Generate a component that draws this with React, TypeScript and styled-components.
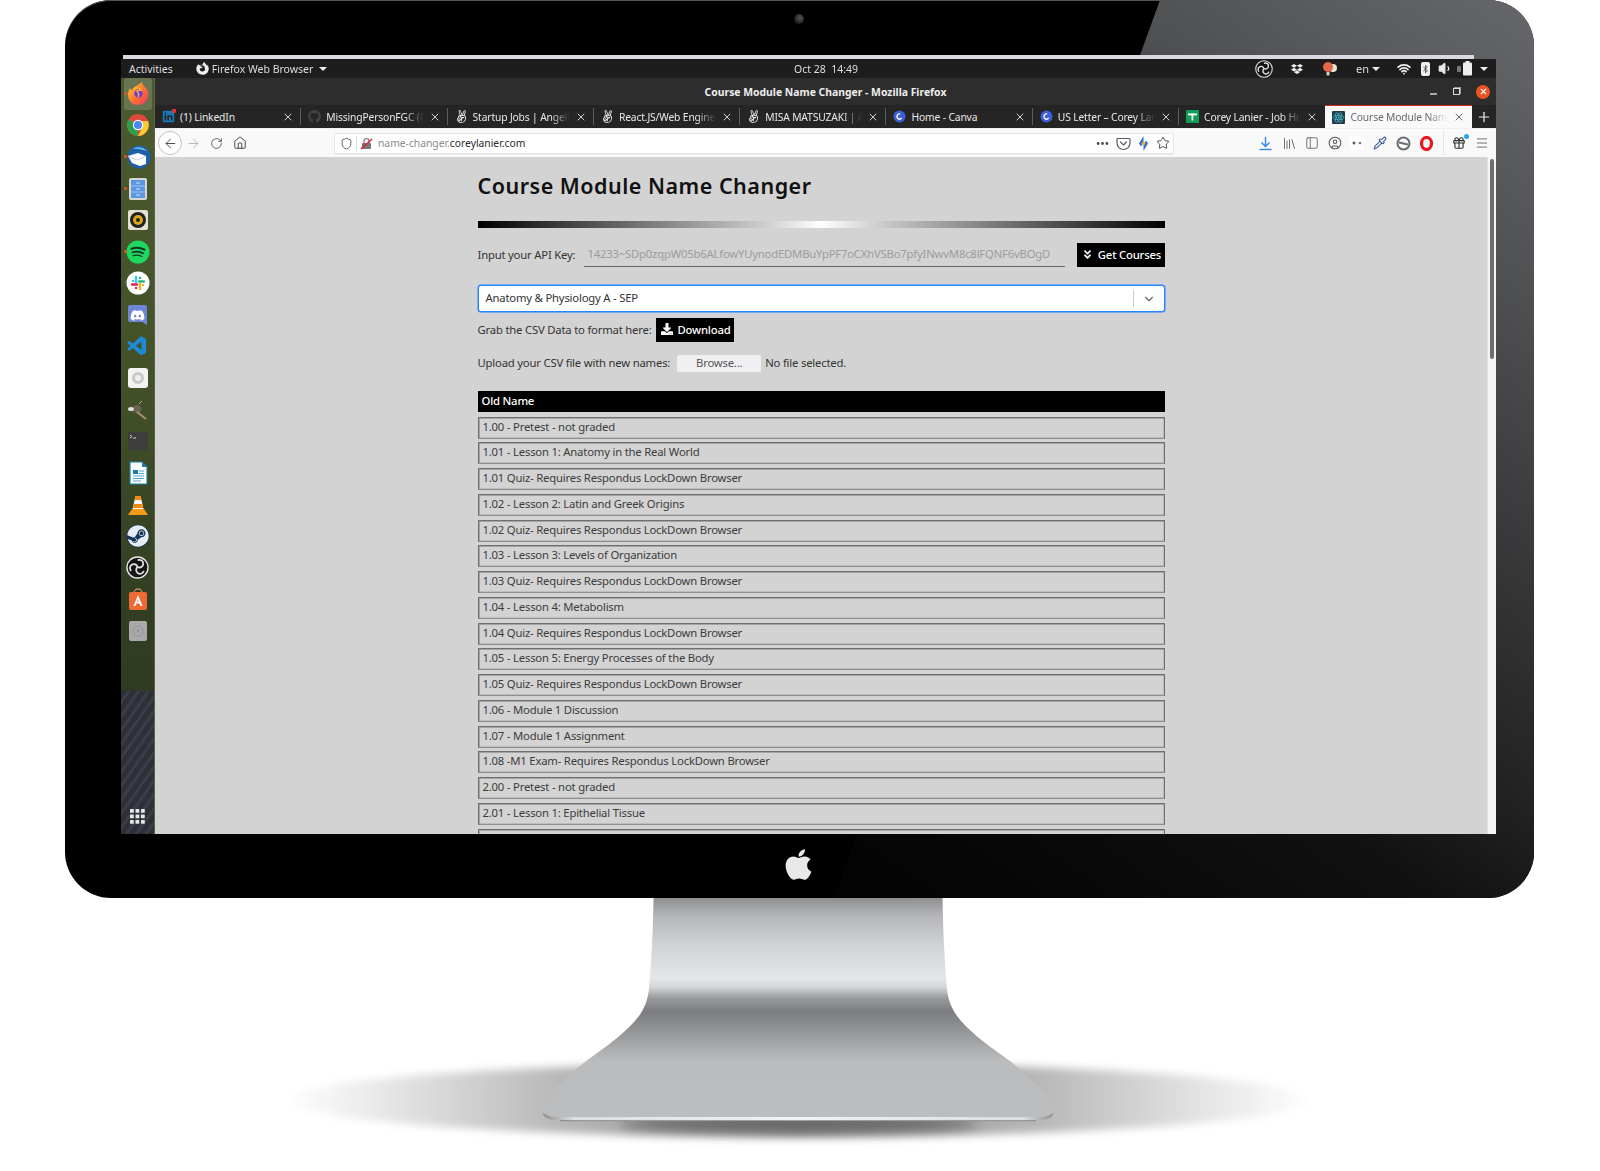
import type { ReactNode } from "react";
import styled, { createGlobalStyle } from "styled-components";
import {
  ArrowLeft,
  ArrowRight,
  Bluetooth,
  ChevronDown,
  CircleUser,
  Ellipsis,
  Gift,
  House,
  Library,
  Menu,
  PanelLeft,
  Pipette,
  Plus,
  RotateCw,
  Shield,
  Star,
  Volume1,
  Wifi,
  X,
} from "lucide-react";
import {
  FaAngellist,
  FaAngleDoubleDown,
  FaApple,
  FaDownload,
  FaDropbox,
  FaFirefoxBrowser,
  FaGithub,
  FaLinkedin,
  FaSteam,
  FaDiscord,
} from "react-icons/fa";
import { VscVscode } from "react-icons/vsc";

const uiFont = `"Noto Sans", "Open Sans", "DejaVu Sans", sans-serif`;

const GlobalStyle = createGlobalStyle`
  html, body {
    margin: 0;
    padding: 0;
    background: #fff;
    overflow: hidden;
  }
  * {
    box-sizing: border-box;
  }
`;

const rows = [
  "1.00 - Pretest - not graded",
  "1.01 - Lesson 1: Anatomy in the Real World",
  "1.01 Quiz- Requires Respondus LockDown Browser",
  "1.02 - Lesson 2: Latin and Greek Origins",
  "1.02 Quiz- Requires Respondus LockDown Browser",
  "1.03 - Lesson 3: Levels of Organization",
  "1.03 Quiz- Requires Respondus LockDown Browser",
  "1.04 - Lesson 4: Metabolism",
  "1.04 Quiz- Requires Respondus LockDown Browser",
  "1.05 - Lesson 5: Energy Processes of the Body",
  "1.05 Quiz- Requires Respondus LockDown Browser",
  "1.06 - Module 1 Discussion",
  "1.07 - Module 1 Assignment",
  "1.08 -M1 Exam- Requires Respondus LockDown Browser",
  "2.00 - Pretest - not graded",
  "2.01 - Lesson 1: Epithelial Tissue",
  "",
];

const LinkedinFav = () => (
  <FavWrap>
    <FaLinkedin size={13} color="#1a78b8" />
    <FavDot />
  </FavWrap>
);

const CanvaFav = () => (
  <svg width="13" height="13" viewBox="0 0 13 13">
    <circle cx="6.5" cy="6.5" r="6" fill="#3d5fd8" />
    <circle cx="6.5" cy="6.5" r="2.6" fill="none" stroke="#fff" strokeWidth="1.3" strokeDasharray="11 5" transform="rotate(35 6.5 6.5)" />
  </svg>
);

const SheetFav = () => (
  <svg width="13" height="13" viewBox="0 0 13 13">
    <rect width="13" height="13" rx="1" fill="#0f9d58" />
    <rect x="2" y="3.5" width="9" height="1.8" fill="#fff" />
    <rect x="5.5" y="3.5" width="1.8" height="7" fill="#fff" />
  </svg>
);

const ReactFav = () => (
  <svg width="13" height="13" viewBox="0 0 13 13">
    <rect width="13" height="13" rx="1" fill="#1f3a44" />
    <g fill="none" stroke="#4fc3d8" strokeWidth=".7">
      <ellipse cx="6.5" cy="6.5" rx="5.4" ry="2.1" />
      <ellipse cx="6.5" cy="6.5" rx="5.4" ry="2.1" transform="rotate(60 6.5 6.5)" />
      <ellipse cx="6.5" cy="6.5" rx="5.4" ry="2.1" transform="rotate(120 6.5 6.5)" />
    </g>
    <circle cx="6.5" cy="6.5" r="1" fill="#4fc3d8" />
  </svg>
);

const tabs: { label: string; icon: ReactNode; active?: boolean; fade?: boolean }[] = [
  { label: "(1) LinkedIn", icon: <LinkedinFav /> },
  { label: "MissingPersonFGC (C", icon: <FaGithub size={13} color="#444" />, fade: true },
  { label: "Startup Jobs | AngelL", icon: <FaAngellist size={13} color="#e8e8e8" />, fade: true },
  { label: "React.JS/Web Engine", icon: <FaAngellist size={13} color="#e8e8e8" />, fade: true },
  { label: "MISA MATSUZAKI | Ar", icon: <FaAngellist size={13} color="#e8e8e8" />, fade: true },
  { label: "Home - Canva", icon: <CanvaFav /> },
  { label: "US Letter – Corey Lan", icon: <CanvaFav />, fade: true },
  { label: "Corey Lanier - Job Hu", icon: <SheetFav />, fade: true },
  { label: "Course Module Name", icon: <ReactFav />, active: true, fade: true },
];

const FirefoxIcon = () => (
  <svg width="24" height="24" viewBox="0 0 24 24">
    <defs>
      <linearGradient id="ffx" x1="0" y1="0" x2="1" y2="1">
        <stop offset="0" stopColor="#ffcf3c" />
        <stop offset=".5" stopColor="#ff7a2b" />
        <stop offset="1" stopColor="#f0306a" />
      </linearGradient>
    </defs>
    <path d="M12 3c1-1 3-2 4-3 0 2 1 3 3 5 3 3 4 6 3 10-1 5-6 8-10 8-6 0-10-5-10-10 0-3 1-5 2-7 0 1 1 2 2 2 1-2 3-4 6-5z" fill="url(#ffx)" />
    <circle cx="12.5" cy="11.5" r="4.2" fill="#6b3fd0" />
    <path d="M7 7c3-2 7-1 8 1-2 0-3 1-4 1 1 2 3 3 1 6" fill="none" stroke="#ffb13c" strokeWidth="1.4" />
  </svg>
);

const ChromeIcon = () => (
  <svg width="24" height="24" viewBox="0 0 24 24">
    <circle cx="12" cy="12" r="11" fill="#dd4b3e" />
    <path d="M12 12 2.5 6.5A11 11 0 0 0 12 23z" fill="#2f9e4f" />
    <path d="M12 8h10a11 11 0 0 1-10 15l4-8z" fill="#fcc934" />
    <circle cx="12" cy="12" r="5.2" fill="#fff" />
    <circle cx="12" cy="12" r="4" fill="#4a87ee" />
  </svg>
);

const ThunderbirdIcon = () => (
  <svg width="26" height="26" viewBox="0 0 26 26">
    <circle cx="14" cy="13" r="11.5" fill="#1f5fa8" />
    <path d="M8 5c4-3 11-2 14 2-3-1-7-2-14-2z" fill="#68b5ee" />
    <path d="M3 12l10-3 8 3v8l-6 2-8-3z" fill="#fff" />
    <path d="M3 12l9 4 9-4" fill="none" stroke="#c4d0dc" strokeWidth="1" />
  </svg>
);

const FilesIcon = () => (
  <svg width="22" height="24" viewBox="0 0 22 24">
    <rect x="2" y="1" width="18" height="22" rx="2" fill="#d8d6cf" />
    <rect x="4" y="3" width="14" height="18" fill="#5c97e3" />
    <path d="M4 9h14M4 15h14" stroke="#9cc1ef" strokeWidth="1" />
    <path d="M9 6h4M9 12h4M9 18h4" stroke="#d7e6fa" strokeWidth="1" />
  </svg>
);

const RhythmboxIcon = () => (
  <svg width="22" height="22" viewBox="0 0 22 22">
    <rect x="1" y="1" width="20" height="20" rx="2" fill="#e6e1d3" />
    <circle cx="11" cy="11" r="8" fill="#222" />
    <circle cx="11" cy="11" r="5" fill="#d9a91a" />
    <circle cx="11" cy="11" r="2" fill="#222" />
  </svg>
);

const SpotifyIcon = () => (
  <svg width="24" height="24" viewBox="0 0 24 24">
    <circle cx="12" cy="12" r="11.5" fill="#1ed760" />
    <g fill="none" stroke="#16351f" strokeLinecap="round">
      <path d="M5.5 8.7c4-1.2 9-1 13 1" strokeWidth="2" />
      <path d="M6.5 12.3c3.5-1 7.5-.8 10.6 1" strokeWidth="1.7" />
      <path d="M7.2 15.6c3-.8 6-.6 8.7.9" strokeWidth="1.4" />
    </g>
  </svg>
);

const SlackIcon = () => (
  <svg width="24" height="24" viewBox="0 0 24 24">
    <circle cx="12" cy="12" r="11.5" fill="#fff" />
    <g strokeWidth="2.4" strokeLinecap="round">
      <path d="M10 6v5M7 10h.1" stroke="#36c5f0" />
      <path d="M6 13.5h5M10 17h.1" stroke="#e01e5a" />
      <path d="M14 18v-5M17 14h.1" stroke="#ecb22e" />
      <path d="M18 10.5h-5M14 7h.1" stroke="#2eb67d" />
    </g>
  </svg>
);

const DiscordIcon = () => (
  <svg width="24" height="24" viewBox="0 0 24 24">
    <path d="M4 2h15a2 2 0 0 1 2 2v18l-5-3H4a2 2 0 0 1-2-2V4a2 2 0 0 1 2-2z" fill="#6f86d6" />
    <foreignObject x="4" y="3" width="15" height="15">
      <FaDiscord size={15} color="#fff" />
    </foreignObject>
  </svg>
);

const SettingsIcon = () => (
  <svg width="22" height="22" viewBox="0 0 22 22">
    <rect x="1" y="1" width="20" height="20" rx="3" fill="#f3f3f3" />
    <circle cx="11" cy="11" r="6" fill="#c9c9c9" />
    <circle cx="11" cy="11" r="3" fill="#eee" />
  </svg>
);

const GimpIcon = () => (
  <svg width="24" height="24" viewBox="0 0 24 24">
    <ellipse cx="11" cy="11" rx="4.5" ry="4" fill="#6b6253" />
    <ellipse cx="5" cy="11" rx="3" ry="2" fill="#ddd" />
    <path d="M11 14l9 7" stroke="#a8916c" strokeWidth="2" />
    <path d="M13 6l3-3" stroke="#aaa" strokeWidth="1" />
  </svg>
);

const TerminalIcon = () => (
  <svg width="22" height="20" viewBox="0 0 22 20">
    <rect x="1" y="1" width="20" height="18" rx="2" fill="#3d3d3d" />
    <path d="M3 4l2 1.5-2 1.5" stroke="#ddd" strokeWidth=".9" fill="none" />
    <path d="M6 7h3" stroke="#ddd" strokeWidth=".9" />
  </svg>
);

const WriterIcon = () => (
  <svg width="22" height="24" viewBox="0 0 22 24">
    <path d="M3 1h12l5 5v17H3z" fill="#fff" stroke="#1c7ea8" strokeWidth="1.2" />
    <path d="M15 1l5 5h-5z" fill="#1c7ea8" />
    <rect x="6" y="9" width="5" height="4" fill="#1c7ea8" />
    <path d="M12 10h5M12 12.5h5M6 15h11M6 17.5h11M6 20h8" stroke="#4ea3c9" strokeWidth="1" />
  </svg>
);

const VlcIcon = () => (
  <svg width="24" height="24" viewBox="0 0 24 24">
    <path d="M9.5 3h5l3 13h-11z" fill="#f7f7f7" />
    <path d="M9.5 3h5l.9 4H8.6zM7.7 11h8.6l.9 4H6.8z" fill="#f28a0e" />
    <path d="M6 16h12l4 6H2z" fill="#f39a16" />
  </svg>
);

const SteamIcon = () => (
  <svg width="24" height="24" viewBox="0 0 24 24">
    <circle cx="12" cy="12" r="11.5" fill="#16365a" />
    <foreignObject x="1" y="1" width="22" height="22">
      <FaSteam size={22} color="#e6edf3" />
    </foreignObject>
  </svg>
);

const ObsGlyph = ({ size }: { size: number }) => (
  <svg width={size} height={size} viewBox="0 0 24 24">
    <circle cx="12" cy="12" r="11" fill="#151515" stroke="#e8e8e8" strokeWidth="1.4" />
    <g fill="none" stroke="#e8e8e8" strokeWidth="1.8">
      <path d="M12 4.5a4 4 0 1 1 .1 7" />
      <path d="M18.5 15.5a4 4 0 1 1-6.4-4" />
      <path d="M5.5 15.5a4 4 0 1 1 6.5-4" />
    </g>
  </svg>
);

const SoftwareIcon = () => (
  <svg width="24" height="24" viewBox="0 0 24 24">
    <path d="M8 6a4 4 0 0 1 8 0" fill="none" stroke="#c9805c" strokeWidth="1.5" />
    <rect x="3" y="5" width="18" height="18" rx="2" fill="#ee6a34" />
    <path d="M12 8l4.5 11h-2l-1-2.6h-3l-1 2.6h-2zM11.200 14.500h1.600L12 12z" fill="#fff" />
  </svg>
);

const DiskIcon = () => (
  <svg width="20" height="22" viewBox="0 0 20 22">
    <rect x="1" y="1" width="18" height="20" rx="2" fill="#a9a9a9" />
    <circle cx="10" cy="11" r="5" fill="none" stroke="#959595" strokeWidth="1" />
    <circle cx="10" cy="11" r="1.5" fill="#959595" />
  </svg>
);

const dockItems: { icon: ReactNode; running?: boolean; active?: boolean }[] = [
  { icon: <FirefoxIcon />, running: true, active: true },
  { icon: <ChromeIcon /> },
  { icon: <ThunderbirdIcon />, running: true },
  { icon: <FilesIcon />, running: true },
  { icon: <RhythmboxIcon /> },
  { icon: <SpotifyIcon />, running: true },
  { icon: <SlackIcon /> },
  { icon: <DiscordIcon /> },
  { icon: <VscVscode size={23} color="#1e8ad6" /> },
  { icon: <SettingsIcon /> },
  { icon: <GimpIcon /> },
  { icon: <TerminalIcon /> },
  { icon: <WriterIcon /> },
  { icon: <VlcIcon /> },
  { icon: <SteamIcon /> },
  { icon: <ObsGlyph size={23} /> },
  { icon: <SoftwareIcon /> },
  { icon: <DiskIcon /> },
];

const InsecureLock = () => (
  <svg width="13" height="13" viewBox="0 0 13 13">
    <rect x="2" y="6" width="9" height="6" rx="1" fill="#777" />
    <path d="M4 6V4a2.5 2.5 0 0 1 5 0v2" fill="none" stroke="#777" strokeWidth="1.2" />
    <path d="M1 12 12 2" stroke="#e0223a" strokeWidth="1.6" />
  </svg>
);

const PocketIcon = () => (
  <svg width="15" height="15" viewBox="0 0 15 15" fill="none" stroke="#5b5b66" strokeWidth="1.2">
    <path d="M2 2.5h11a1 1 0 0 1 1 1V7a6.5 6.5 0 0 1-13 0V3.5a1 1 0 0 1 1-1z" />
    <path d="M4.5 6l3 3 3-3" strokeLinecap="round" />
  </svg>
);

const LighthouseIcon = () => (
  <svg width="13" height="15" viewBox="0 0 13 15">
    <path d="M6.5 0 2 7.5l2 3 2.5-4z" fill="#2f6fe0" />
    <path d="M6.5 15 11 7.5l-2-3-2.5 4z" fill="#2f6fe0" />
    <path d="M6.5 5 8.5 7.5l-2 2.5-2-2.5z" fill="#f2b01e" />
  </svg>
);

const DotsExtension = () => (
  <svg width="14" height="14" viewBox="0 0 14 14">
    <rect width="14" height="14" fill="#fff" />
    <path d="M4 5.5v3M2.5 7h3" stroke="#333" strokeWidth="1.2" />
    <circle cx="10" cy="7" r="1.3" fill="#777" />
  </svg>
);

const BlockedIcon = () => (
  <svg width="15" height="15" viewBox="0 0 15 15" fill="none" stroke="#6a6a70" strokeWidth="2">
    <circle cx="7.5" cy="7.5" r="6" />
    <path d="M3 6.5l9 2" />
  </svg>
);

const OperaIcon = () => (
  <svg width="15" height="15" viewBox="0 0 15 15">
    <ellipse cx="7.5" cy="7.5" rx="5" ry="6" fill="none" stroke="#f0141e" strokeWidth="3.2" />
  </svg>
);

const DownloadBarIcon = () => (
  <svg width="15" height="15" viewBox="0 0 15 15" fill="none" stroke="#2f86f5" strokeWidth="1.4">
    <path d="M7.5 1v9M3.5 6.5l4 4 4-4" />
    <path d="M1.5 13.500h12" />
  </svg>
);

const TrayBulb = () => (
  <svg width="16" height="16" viewBox="0 0 16 16">
    <circle cx="11" cy="7" r="4" fill="#e8e2d8" />
    <circle cx="6" cy="6" r="5" fill="#e4664c" />
    <rect x="4.5" y="11" width="3" height="3.5" fill="#d8c9a8" />
  </svg>
);

const BatteryIcon = () => (
  <svg width="20" height="16" viewBox="0 0 20 16">
    <rect x="0" y="5" width="4" height="6" rx="1" fill="#777" />
    <rect x="6" y="1.5" width="9" height="13" rx="1" fill="#eee" />
    <rect x="8.5" y="0" width="4" height="2" fill="#eee" />
  </svg>
);

const Caret = () => <CaretShape />;

const App = () => {
  return (
    <Page>
      <GlobalStyle />
      <Bezel>
        <BezelSheen />
        <Camera />
        <Screen>
          <TopStrip />
          <TopBar>
            <TopLeft>
              <span>Activities</span>
              <AppMenu>
                <FaFirefoxBrowser size={13} color="#eee" />
                Firefox Web Browser
                <Caret />
              </AppMenu>
            </TopLeft>
            <Clock>Oct 28&nbsp;&nbsp;14:49</Clock>
            <Tray>
              <TraySlot $w={33}>
                <ObsGlyph size={18} />
              </TraySlot>
              <TraySlot $w={33}>
                <FaDropbox size={12} color="#eee" />
              </TraySlot>
              <TraySlot $w={33}>
                <TrayBulb />
              </TraySlot>
              <TraySlot $w={44}>
                en
                <Caret />
              </TraySlot>
              <TraySlot $w={27}>
                <Wifi size={14} color="#f2f2f2" strokeWidth={3} />
              </TraySlot>
              <TraySlot $w={16}>
                <BluetoothBox>
                  <Bluetooth size={10} color="#333" strokeWidth={2} />
                </BluetoothBox>
              </TraySlot>
              <TraySlot $w={24}>
                <Volume1 size={15} color="#e8e8e8" fill="#e8e8e8" />
              </TraySlot>
              <TraySlot $w={20}>
                <BatteryIcon />
              </TraySlot>
              <TraySlot $w={11}>
                <Caret />
              </TraySlot>
            </Tray>
          </TopBar>
          <Desktop>
            <Dock>
              {dockItems.map((item, i) => (
                <DockItem key={i} $active={item.active}>
                  {item.running && <RunningDot $active={item.active} />}
                  {item.icon}
                </DockItem>
              ))}
              <DockFooter>
                <svg width="15" height="15" viewBox="0 0 15 15" fill="#e6e6e6">
                  {[0, 5.5, 11].flatMap((y) =>
                    [0, 5.5, 11].map((x) => (
                      <rect key={`${x}-${y}`} x={x} y={y} width="3.8" height="3.8" rx=".6" />
                    ))
                  )}
                </svg>
              </DockFooter>
            </Dock>
            <Browser>
              <TitleBar>
                <WindowTitle>Course Module Name Changer - Mozilla Firefox</WindowTitle>
                <WindowButtons>
                  <MinimizeBar />
                  <RestoreBox />
                  <CloseDot>
                    <X size={9} color="#fff" strokeWidth={3} />
                  </CloseDot>
                </WindowButtons>
              </TitleBar>
              <TabStrip>
                {tabs.map((tab, i) => (
                  <Tab key={tab.label} $active={tab.active} $separator={!tab.active && i < tabs.length - 2}>
                    <TabIcon>{tab.icon}</TabIcon>
                    <TabLabel $active={tab.active} $fade={tab.fade}>
                      {tab.label}
                    </TabLabel>
                    <X size={12} strokeWidth={1.8} color={tab.active ? "#555" : "#e4e4e4"} />
                  </Tab>
                ))}
                <NewTab>
                  <Plus size={16} strokeWidth={1.8} color="#eee" />
                </NewTab>
              </TabStrip>
              <Toolbar>
                <BackButton>
                  <ArrowLeft size={15} strokeWidth={1.5} color="#444" />
                </BackButton>
                <NavButton>
                  <ArrowRight size={15} strokeWidth={1.5} color="#b4b4b8" />
                </NavButton>
                <NavButton>
                  <RotateCw size={13} strokeWidth={1.5} color="#444" />
                </NavButton>
                <NavButton>
                  <House size={14} strokeWidth={1.5} color="#333" />
                </NavButton>
                <UrlBar>
                  <Shield size={13} strokeWidth={1.5} color="#444" />
                  <UrlDivider />
                  <InsecureLock />
                  <UrlText>
                    name-changer.<b>coreylanier.com</b>
                  </UrlText>
                  <UrlActions>
                    <Ellipsis size={15} color="#444" strokeWidth={2.5} />
                    <PocketIcon />
                    <LighthouseIcon />
                    <Star size={14} color="#333" strokeWidth={1.5} />
                  </UrlActions>
                </UrlBar>
                <ToolIcons>
                  <DownloadBarIcon />
                  <Library size={15} strokeWidth={1.4} color="#5b5b66" />
                  <PanelLeft size={14} strokeWidth={1.4} color="#5b5b66" />
                  <CircleUser size={14} strokeWidth={1.8} color="#555" />
                  <DotsExtension />
                  <Pipette size={14} strokeWidth={1.8} color="#35508f" />
                  <BlockedIcon />
                  <OperaIcon />
                  <ToolDivider />
                  <GiftSlot>
                    <Gift size={14} strokeWidth={2} color="#333" />
                    <GiftBadge />
                  </GiftSlot>
                  <Menu size={14} strokeWidth={1.5} color="#5b5b66" />
                </ToolIcons>
              </Toolbar>
              <Viewport>
                <Content>
                  <Heading>Course Module Name Changer</Heading>
                  <Divider />
                  <ApiRow>
                    <FieldLabel>Input your API Key:</FieldLabel>
                    <ApiInput>14233~SDp0zqpW05b6ALfowYUynodEDMBuYpPF7oCXhVSBo7pfyINwvM8c8lFQNF6vBOgD</ApiInput>
                    <BlackButton>
                      <FaAngleDoubleDown size={11} />
                      Get Courses
                    </BlackButton>
                  </ApiRow>
                  <SelectBox>
                    <SelectValue>Anatomy &amp; Physiology A - SEP</SelectValue>
                    <SelectArrow>
                      <ChevronDown size={14} strokeWidth={2} color="#666" />
                    </SelectArrow>
                  </SelectBox>
                  <DownloadRow>
                    <FieldLabel>Grab the CSV Data to format here:</FieldLabel>
                    <BlackButton>
                      <FaDownload size={12} />
                      Download
                    </BlackButton>
                  </DownloadRow>
                  <UploadRow>
                    <FieldLabel>Upload your CSV file with new names:</FieldLabel>
                    <BrowseButton>Browse...</BrowseButton>
                    <FieldLabel>No file selected.</FieldLabel>
                  </UploadRow>
                  <TableHead>Old Name</TableHead>
                  <RowList>
                    {rows.map((row, i) => (
                      <NameRow key={i}>{row}</NameRow>
                    ))}
                  </RowList>
                </Content>
                <Scrollbar>
                  <ScrollThumb />
                </Scrollbar>
              </Viewport>
            </Browser>
          </Desktop>
        </Screen>
        <Chin>
          <FaApple size={35} color="#e7e8e9" />
        </Chin>
      </Bezel>
      <StandArt viewBox="0 898 1600 273" width="1600" height="273">
        <defs>
          <linearGradient id="standFill" x1="0" y1="898" x2="0" y2="1121" gradientUnits="userSpaceOnUse">
            <stop offset="0" stopColor="#8e8f91" />
            <stop offset=".08" stopColor="#b4b5b7" />
            <stop offset=".2" stopColor="#cfd0d2" />
            <stop offset=".36" stopColor="#e5e6e7" />
            <stop offset=".4" stopColor="#d4d5d6" />
            <stop offset=".45" stopColor="#98999b" />
            <stop offset=".51" stopColor="#7c7d80" />
            <stop offset=".58" stopColor="#8f9092" />
            <stop offset=".73" stopColor="#bbbcbe" />
            <stop offset="1" stopColor="#bcbdbf" />
          </linearGradient>
          <linearGradient id="shadowFill" x1="285" y1="0" x2="1313" y2="0" gradientUnits="userSpaceOnUse">
            <stop offset="0" stopColor="#ffffff" />
            <stop offset=".1" stopColor="#e6e6e6" />
            <stop offset=".28" stopColor="#b4b4b4" />
            <stop offset=".5" stopColor="#8c8c8c" />
            <stop offset=".72" stopColor="#b4b4b4" />
            <stop offset=".9" stopColor="#e6e6e6" />
            <stop offset="1" stopColor="#ffffff" />
          </linearGradient>
          <linearGradient id="rimFill" x1="543" y1="0" x2="1054" y2="0" gradientUnits="userSpaceOnUse">
            <stop offset="0" stopColor="#8f9092" />
            <stop offset=".06" stopColor="#dcdddf" />
            <stop offset=".5" stopColor="#f2f3f4" />
            <stop offset=".94" stopColor="#dcdddf" />
            <stop offset="1" stopColor="#8f9092" />
          </linearGradient>
          <filter id="soft" x="-10%" y="-50%" width="120%" height="200%">
            <feGaussianBlur stdDeviation="4" />
          </filter>
          <filter id="softer" x="-20%" y="-100%" width="140%" height="300%">
            <feGaussianBlur stdDeviation="6" />
          </filter>
        </defs>
        <ellipse cx="799" cy="1100" rx="514" ry="37" fill="url(#shadowFill)" filter="url(#soft)" />
        <ellipse cx="799" cy="1124" rx="180" ry="8" fill="#666" filter="url(#softer)" />
        <path
          d="M653.5 898H942.6C943 935 945 965 946.8 986.7C948 1000 951 1006 955 1013C964 1027 983 1042 1004 1056.7C1016 1065 1030 1078 1039.5 1086.7C1046 1093 1053 1104 1053.5 1113C1053.5 1118 1046 1120.7 1036 1120.7H560C550 1120.7 542.5 1118 542.5 1113C543 1104 550 1093 556.5 1086.7C566 1078 580 1065 592 1056.7C613 1042 632 1027 641 1013C645 1006 648 1000 649.2 986.7C651 965 653 935 653.5 898Z"
          fill="url(#standFill)"
        />
        <path
          d="M542.8 1113C548 1116 552 1117 560 1117H1036C1044 1117 1048 1116 1053.3 1113C1053 1118 1046 1120.7 1036 1120.7H560C550 1120.7 543 1118 542.8 1113Z"
          fill="url(#rimFill)"
        />
        <path d="M560 1120.7H1036" stroke="#77787a" strokeWidth=".8" />
      </StandArt>
    </Page>
  );
};

export default App;

const Page = styled.div`
  width: 1600px;
  height: 1171px;
  background: #fff;
  overflow: hidden;
  font-family: ${uiFont};
`;

const Bezel = styled.div`
  position: relative;
  margin-left: 65px;
  width: 1469px;
  height: 898px;
  padding: 55px 38px 0 56px;
  border-radius: 46px;
  background: #000;
  box-shadow: inset 0 1px 0 #555;
  overflow: hidden;
`;

const BezelSheen = styled.div`
  position: absolute;
  inset: 0;
  clip-path: polygon(1095px 0, 1469px 0, 1469px 898px, 769px 898px);
  background: linear-gradient(
    215deg,
    #66676a 0%,
    #505153 15%,
    #222223 42%,
    #111 50%,
    #060606 65%,
    #000 80%
  );
`;

const Camera = styled.div`
  position: absolute;
  left: 729px;
  top: 14px;
  width: 10px;
  height: 10px;
  border-radius: 50%;
  background: radial-gradient(circle at 60% 40%, #555, #1c1c1c 70%);
`;

const Screen = styled.div`
  position: relative;
  width: 1375px;
  height: 779px;
  display: flex;
  flex-direction: column;
  overflow: hidden;
  filter: blur(0.3px);
`;

const TopStrip = styled.div`
  flex: 0 0 4px;
  margin: 0 22px 0 2px;
  background: #dcd8e2;
`;

const TopBar = styled.div`
  flex: 0 0 19px;
  position: relative;
  display: flex;
  align-items: center;
  justify-content: space-between;
  background: #1d1d1d;
  color: #dedede;
  font-size: 10.5px;
  padding: 0 8px 0 8px;
`;

const TopLeft = styled.div`
  display: flex;
  align-items: center;
  gap: 23px;
`;

const AppMenu = styled.div`
  display: flex;
  align-items: center;
  gap: 3px;
`;

const CaretShape = styled.span`
  display: inline-block;
  margin-left: 3px;
  border-left: 4px solid transparent;
  border-right: 4px solid transparent;
  border-top: 4px solid #eee;
`;

const Clock = styled.div`
  position: absolute;
  left: 660px;
  width: 90px;
  text-align: center;
`;

const Tray = styled.div`
  display: flex;
  align-items: center;
`;

const TraySlot = styled.div<{ $w: number }>`
  width: ${({ $w }) => $w}px;
  display: flex;
  align-items: center;
  justify-content: center;
  font-size: 11px;
`;

const BluetoothBox = styled.div`
  width: 9px;
  height: 14px;
  background: #eee;
  border-radius: 2px;
  display: flex;
  align-items: center;
  justify-content: center;
`;

const Desktop = styled.div`
  flex: 1;
  display: flex;
  min-height: 0;
`;

const Dock = styled.div`
  flex: 0 0 34px;
  display: flex;
  flex-direction: column;
  background: linear-gradient(to bottom, #4b5a2f 0%, #435129 40%, #333f23 68%, #2a3420 100%);
  border-right: 1px solid #5a6348;
`;

const DockItem = styled.div<{ $active?: boolean }>`
  position: relative;
  flex: 0 0 31.6px;
  display: flex;
  align-items: center;
  justify-content: center;
  background: ${({ $active }) => ($active ? "rgba(255,255,255,.17)" : "none")};
  margin: ${({ $active }) => ($active ? "0 2px 0 3px" : "0")};
  border-radius: ${({ $active }) => ($active ? "3px" : "0")};
`;

const RunningDot = styled.span<{ $active?: boolean }>`
  position: absolute;
  left: ${({ $active }) => ($active ? "0" : "3px")};
  top: 14px;
  width: 3px;
  height: 3px;
  border-radius: 50%;
  background: #e95420;
`;

const DockFooter = styled.div`
  margin-top: auto;
  height: 143px;
  display: flex;
  align-items: flex-end;
  justify-content: center;
  padding-bottom: 10px;
  background: repeating-linear-gradient(-55deg, #2d3038 0 5px, #3a3d47 5px 8px);
`;

const Browser = styled.div`
  flex: 1;
  min-width: 0;
  display: flex;
  flex-direction: column;
`;

const TitleBar = styled.div`
  flex: 0 0 27px;
  position: relative;
  display: flex;
  align-items: center;
  justify-content: center;
  background: #2e2d2d;
`;

const WindowTitle = styled.div`
  color: #eeeeee;
  font-size: 10.4px;
  font-weight: 700;
`;

const WindowButtons = styled.div`
  position: absolute;
  right: 6px;
  top: 0;
  bottom: 0;
  display: flex;
  align-items: center;
  gap: 16px;
`;

const MinimizeBar = styled.div`
  width: 7px;
  height: 2px;
  margin-top: 5px;
  background: #aaa;
`;

const RestoreBox = styled.div`
  width: 7px;
  height: 7px;
  border: 1.5px solid #ddd;
  box-shadow: 1px -1px 0 #999;
`;

const CloseDot = styled.div`
  width: 14px;
  height: 14px;
  border-radius: 50%;
  background: #e95420;
  display: flex;
  align-items: center;
  justify-content: center;
`;

const TabStrip = styled.div`
  flex: 0 0 23px;
  display: flex;
  background: #252525;
`;

const Tab = styled.div<{ $active?: boolean; $separator?: boolean }>`
  position: relative;
  flex: 0 0 146.3px;
  min-width: 0;
  display: flex;
  align-items: center;
  gap: 5px;
  padding: 0 7px 0 7px;
  background: ${({ $active }) => ($active ? "#f9f9fa" : "transparent")};
  border-top: ${({ $active }) => ($active ? "1px solid #d7271c" : "none")};
  &::after {
    content: "";
    display: ${({ $separator }) => ($separator ? "block" : "none")};
    position: absolute;
    right: 0;
    top: 3px;
    bottom: 3px;
    width: 1px;
    background: #5d5d5d;
  }
`;

const TabIcon = styled.span`
  display: flex;
  flex: 0 0 13px;
`;

const FavWrap = styled.span`
  position: relative;
  display: flex;
`;

const FavDot = styled.span`
  position: absolute;
  top: -1px;
  right: -1px;
  width: 4px;
  height: 4px;
  background: #e0352b;
  border-radius: 1px;
`;

const TabLabel = styled.span<{ $active?: boolean; $fade?: boolean }>`
  flex: 1;
  min-width: 0;
  white-space: nowrap;
  font-size: 10.3px;
  letter-spacing: -0.15px;
  color: ${({ $active }) => ($active ? "#6a6a70" : "#e8e8e8")};
  ${({ $fade }) =>
    $fade
      ? "mask-image: linear-gradient(to right, #000 80%, transparent 100%);"
      : ""}
`;

const NewTab = styled.div`
  flex: 1;
  display: flex;
  align-items: center;
  justify-content: center;
`;

const Toolbar = styled.div`
  flex: 0 0 29px;
  display: flex;
  align-items: center;
  background: #f9f9fa;
  padding-left: 3px;
  border-top: 1px solid #f0f0f2;
`;

const BackButton = styled.div`
  flex: 0 0 24px;
  height: 24px;
  border-radius: 50%;
  border: 1px solid #c4c4c8;
  background: #fff;
  display: flex;
  align-items: center;
  justify-content: center;
`;

const NavButton = styled.div`
  flex: 0 0 23px;
  display: flex;
  align-items: center;
  justify-content: center;
`;

const UrlBar = styled.div`
  flex: 0 0 840px;
  height: 21px;
  margin-left: 83px;
  display: flex;
  align-items: center;
  padding: 0 3px 0 5px;
  background: #fff;
  border: 1px solid #e6e6e8;
  border-radius: 2px;
  box-shadow: 0 1px 1px rgba(0, 0, 0, 0.06);
`;

const UrlDivider = styled.span`
  width: 1px;
  height: 15px;
  margin: 0 3px 0 3px;
  background: #dcdcde;
`;

const UrlText = styled.span`
  margin-left: 5px;
  font-size: 10.3px;
  color: #8a8a90;
  & b {
    font-weight: 400;
    color: #2a2a2e;
  }
`;

const UrlActions = styled.div`
  margin-left: auto;
  display: flex;
  align-items: center;
  gap: 6px;
`;

const ToolIcons = styled.div`
  flex: 1;
  display: flex;
  align-items: center;
  justify-content: flex-end;
  gap: 8.6px;
  padding-right: 7px;
`;

const ToolDivider = styled.span`
  width: 1px;
  height: 24px;
  background: #e2e2e4;
`;

const GiftSlot = styled.span`
  position: relative;
  display: flex;
`;

const GiftBadge = styled.span`
  position: absolute;
  top: -2px;
  right: -3px;
  width: 5px;
  height: 5px;
  border-radius: 50%;
  background: #22a7f0;
`;

const Viewport = styled.div`
  flex: 1;
  min-height: 0;
  display: flex;
  background: #d3d3d3;
  overflow: hidden;
`;

const Content = styled.div`
  flex: 0 0 687.5px;
  margin-left: 322.5px;
  margin-right: auto;
  color: #333;
  font-size: 11.3px;
  letter-spacing: -0.2px;
`;

const Heading = styled.h1`
  margin: 13.5px 0 0;
  height: 30px;
  line-height: 30px;
  font-size: 21.5px;
  font-weight: 600;
  letter-spacing: 0.5px;
  color: #111;
`;

const Divider = styled.div`
  height: 7px;
  margin-top: 20.5px;
  background: linear-gradient(to right, #000 0%, #cfcfcf 42%, #fff 50%, #cfcfcf 58%, #000 100%);
`;

const ApiRow = styled.div`
  height: 24px;
  margin-top: 15px;
  display: flex;
  align-items: center;
`;

const FieldLabel = styled.span`
  white-space: nowrap;
  margin-top: -2px;
`;

const ApiInput = styled.div`
  flex: 0 0 481px;
  margin-left: 9px;
  height: 24px;
  line-height: 22px;
  padding-left: 3px;
  overflow: hidden;
  white-space: nowrap;
  color: #9c9c9c;
  border-bottom: 1px solid #666;
`;

const BlackButton = styled.div`
  display: flex;
  align-items: center;
  gap: 5px;
  height: 24px;
  margin-left: auto;
  padding: 0 4px 2px 5px;
  background: #000;
  color: #fff;
  font-weight: 500;
  white-space: nowrap;
`;

const SelectBox = styled.div`
  height: 27px;
  margin-top: 18px;
  display: flex;
  align-items: center;
  background: #fff;
  border: 1px solid #2684ff;
  box-shadow: 0 0 0 0.5px #2684ff;
  border-radius: 3px;
`;

const SelectValue = styled.span`
  flex: 1;
  margin-top: -2px;
  padding-left: 7px;
  color: #333;
`;

const SelectArrow = styled.span`
  flex: 0 0 31px;
  height: 17px;
  display: flex;
  align-items: center;
  justify-content: center;
  border-left: 1px solid #ccc;
`;

const DownloadRow = styled.div`
  height: 24px;
  margin-top: 6px;
  display: flex;
  align-items: center;
  gap: 4px;
  & > div {
    margin-left: 0;
  }
`;

const UploadRow = styled.div`
  height: 17px;
  margin-top: 13px;
  display: flex;
  align-items: center;
`;

const BrowseButton = styled.div`
  flex: 0 0 84px;
  height: 17px;
  margin: 0 4px 0 7px;
  line-height: 16px;
  text-align: center;
  background: #f0f0f2;
  border-radius: 2px;
  color: #555;
`;

const TableHead = styled.div`
  height: 21.3px;
  margin-top: 18.7px;
  padding-left: 4px;
  line-height: 20px;
  background: #000;
  color: #fff;
  font-weight: 500;
`;

const RowList = styled.div`
  margin-top: 4.7px;
  display: flex;
  flex-direction: column;
  gap: 3.75px;
`;

const NameRow = styled.div`
  height: 22px;
  flex: 0 0 22px;
  line-height: 18.5px;
  padding-left: 4px;
  border: 1px solid #6f6f6f;
  border-bottom-color: #8d8d8d;
  box-shadow: inset 1px 1px 0 #a4a4a4, inset -1px -1px 0 #bdbdbd;
  color: #3c3c3c;
`;

const Scrollbar = styled.div`
  flex: 0 0 8px;
  padding: 2px 2px 0;
  background: #f5f5f5;
  border-left: 1px solid #e2e2e2;
`;

const ScrollThumb = styled.div`
  width: 4px;
  height: 200px;
  border-radius: 2px;
  background: #6e6e6e;
`;

const Chin = styled.div`
  position: relative;
  height: 64px;
  width: 1375px;
  display: flex;
  align-items: center;
  justify-content: center;
  padding: 0 20px 4px 0;
`;

const StandArt = styled.svg`
  display: block;
`;
